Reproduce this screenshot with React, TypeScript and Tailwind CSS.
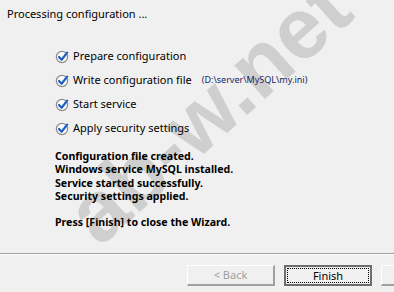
import React from "react";

const CheckIcon = () => (
  <svg width="15" height="15" viewBox="0 0 15 15" className="shrink-0">
    <circle cx="7" cy="8" r="5.6" fill="#fbfbfb" stroke="#8c8c8c" strokeWidth="1.2" />
    <path d="M4 8 L6.6 10.8 L12.2 3.6" fill="none" stroke="#1f5fc8" strokeWidth="2.2" strokeLinecap="round" strokeLinejoin="round" />
  </svg>
);

const steps = [
  { label: "Prepare configuration" },
  { label: "Write configuration file", extra: "(D:\\server\\MySQL\\my.ini)" },
  { label: "Start service" },
  { label: "Apply security settings" },
];

const messages = [
  "Configuration file created.",
  "Windows service MySQL installed.",
  "Service started successfully.",
  "Security settings applied.",
];

export default function App() {
  return (
    <div
      className="relative w-[394px] h-[292px] overflow-hidden bg-[#f0f0f0] text-[11px] text-black flex flex-col"
      style={{ fontFamily: '"Noto Sans", "Open Sans", sans-serif' }}
    >
      {/* watermark */}
      <div
        className="pointer-events-none absolute left-[208px] top-[110px] z-0 -translate-x-1/2 -translate-y-1/2 -rotate-[42deg] whitespace-nowrap text-[86px] font-bold leading-none text-[#cfcfcf]"
        style={{ fontFamily: '"Liberation Sans", Arial, sans-serif' }}
      >
        ab-w.net
      </div>

      <div className="relative z-10 flex flex-col">
        <div className="pl-[7px] pt-[6px] leading-[16px]">Processing configuration ...</div>

        <div className="mt-[22px] flex flex-col pl-[55px]">
          {steps.map((s) => (
            <div key={s.label} className="flex h-[24px] items-center">
              <CheckIcon />
              <span className="ml-[3px]">{s.label}</span>
              {s.extra && (
                <span className="ml-[10px] text-[9px] text-[#1a2560]">{s.extra}</span>
              )}
            </div>
          ))}
        </div>

        <div className="mt-[10px] flex flex-col pl-[55px] text-[10.6px] font-bold leading-[13.33px]">
          {messages.map((m) => (
            <div key={m}>{m}</div>
          ))}
          <div className="mt-[13px]">Press [Finish] to close the Wizard.</div>
        </div>
      </div>

      <div className="relative z-10 mt-auto">
        <div className="h-px bg-[#a0a0a0]" />
        <div className="h-px bg-white" />
        <div className="flex gap-[9px] pl-[187px] pt-[10px] pb-[6px]">
          <div className="flex h-[21px] w-[88px] shrink-0 items-center justify-center border-t border-l border-t-white border-l-white border-r-2 border-b-2 border-r-[#a0a0a0] border-b-[#a0a0a0] bg-[#f0f0f0] text-[#a0a0a0]">
            &lt; Back
          </div>
          <div className="flex h-[21px] w-[88px] shrink-0 items-center justify-center border-2 border-[#6d6d6d] bg-[#f0f0f0] p-[1px]">
            <div className="flex h-full w-full items-center justify-center border border-dotted border-black leading-none">
              Finish
            </div>
          </div>
          <div className="h-[21px] w-[88px] shrink-0 border-t border-l border-t-white border-l-white border-r-2 border-b-2 border-r-[#a0a0a0] border-b-[#a0a0a0] bg-[#f0f0f0]" />
        </div>
      </div>
    </div>
  );
}
